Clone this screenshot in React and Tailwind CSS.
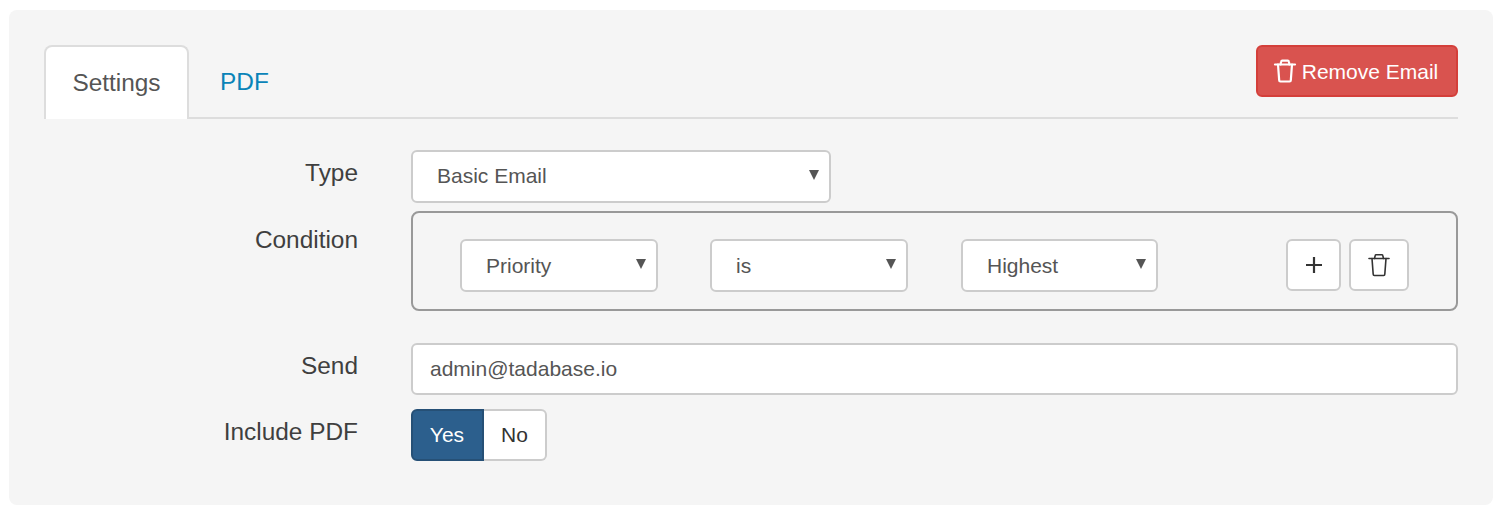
import React from "react";

function TrashIcon({ className, strokeWidth = 1.6 }) {
  return (
    <svg viewBox="0 0 24 24" fill="none" stroke="currentColor" strokeWidth={strokeWidth} strokeLinecap="round" strokeLinejoin="round" className={className}>
      <path d="M2 5.5h20" />
      <path d="M7.5 5.5l.7-3c.1-.5.5-.8 1-.8h5.6c.5 0 .9.3 1 .8l.7 3" />
      <path d="M5 5.5l1.2 15.8c0 .7.5 1.2 1.2 1.2h9.2c.7 0 1.2-.5 1.2-1.2L19 5.5" />
    </svg>
  );
}

function Select({ value, className, arrowClass = "top-[20px]", inputClass = "" }) {
  return (
    <div className={`relative h-[53px] ${className}`}>
      <select
        defaultValue={value}
        className={`w-full h-full appearance-none bg-white border-2 border-[#ccc] rounded-[6px] pl-6 pr-8 text-[21px] text-[#555] outline-none ${inputClass}`}
      >
        <option>{value}</option>
      </select>
      <svg viewBox="0 0 10 10" className={`absolute right-[12px] ${arrowClass} w-[10px] h-[10px] text-[#555] pointer-events-none`}>
        <path d="M0 0h10L5 10z" fill="currentColor" />
      </svg>
    </div>
  );
}

function Row({ label, className, labelClass = "pt-[6px]", children }) {
  return (
    <div className={`flex ${className}`}>
      <label className={`w-[314px] shrink-0 text-right text-[24.4px] leading-[34px] text-[#3f3f3f] ${labelClass}`}>{label}</label>
      <div className="flex-1 ml-[53px] min-w-0">{children}</div>
    </div>
  );
}

export default function App() {
  return (
    <div className="w-[1506px] h-[516px] bg-white pt-[10px] pl-[9px] font-['Liberation_Sans',Arial,sans-serif]">
      <div className="w-[1484px] h-[495px] bg-[#f5f5f5] rounded-[8px] pt-[35px] px-[35px]">
        <div className="flex items-start justify-between h-[74px] border-b-2 border-[#ddd]">
          <div className="flex">
            <div className="h-[74px] w-[145px] bg-white border-2 border-b-0 border-[#ddd] rounded-t-[8px] flex items-center justify-center text-[24.4px] text-[#555]">
              Settings
            </div>
            <a className="h-[74px] ml-[31px] flex items-center text-[24.4px] text-[#0a84b8]">PDF</a>
          </div>
          <button className="h-[52px] w-[202px] bg-[#d9534f] border-2 border-[#d43f3a] rounded-[6px] flex items-center justify-center text-[21px] text-white">
            <TrashIcon className="w-[24px] h-[24px] -ml-[3px] mr-[5px]" strokeWidth={2.2} />
            <span className="mt-[1px]">Remove Email</span>
          </button>
        </div>

        <Row label="Type" className="mt-[31px]">
          <Select value="Basic Email" className="w-[420px]" inputClass="pb-[2px]" />
        </Row>

        <Row label="Condition" className="mt-[8px]" labelClass="pt-[12px]">
          <div className="h-[100px] border-2 border-[#999] rounded-[8px] pl-[47px] pt-[26px] flex items-start">
            <Select value="Priority" className="w-[198px]" />
            <Select value="is" className="w-[198px] ml-[52px]" />
            <Select value="Highest" className="w-[197px] ml-[53px]" />
            <button className="w-[55px] h-[52px] ml-[128px] bg-white border-2 border-[#ccc] rounded-[6px] flex items-center justify-center text-[#333]">
              <svg viewBox="0 0 16 16" className="w-[16px] h-[16px]" fill="none" stroke="currentColor" strokeWidth="2.2">
                <path d="M8 0v16M0 8h16" />
              </svg>
            </button>
            <button className="w-[60px] h-[52px] ml-[8px] bg-white border-2 border-[#ccc] rounded-[6px] flex items-center justify-center text-[#333]">
              <TrashIcon className="w-[24px] h-[24px]" />
            </button>
          </div>
        </Row>

        <Row label="Send" className="mt-[32px]">
          <input
            defaultValue="admin@tadabase.io"
            className="w-full h-[52px] bg-white border-2 border-[#ccc] rounded-[6px] px-[17px] text-[21px] text-[#555] outline-none"
          />
        </Row>

        <Row label="Include PDF" className="mt-[14px]">
          <div className="flex h-[52px] text-[21px]">
            <button className="w-[73px] bg-[#2c5f8d] border-2 border-[#265076] rounded-l-[6px] text-white font-medium pr-[1px]">Yes</button>
            <button className="w-[63px] bg-white border-2 border-l-0 border-[#ccc] rounded-r-[6px] text-[#333]">No</button>
          </div>
        </Row>
      </div>
    </div>
  );
}
